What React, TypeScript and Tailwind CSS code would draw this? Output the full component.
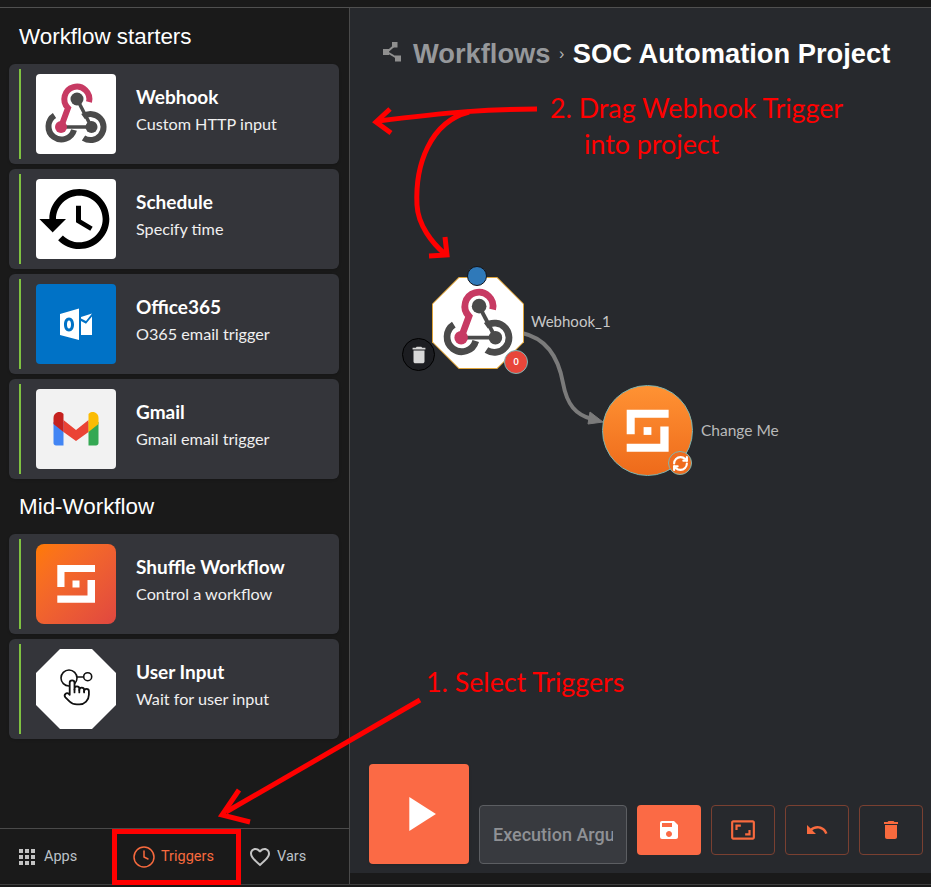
import type { ReactNode } from "react";
import { MdApps, MdAspectRatio, MdDelete, MdFavoriteBorder, MdPlayArrow, MdSave, MdUndo } from "react-icons/md";
import { Clock, RefreshCw } from "lucide-react";

function WebhookIcon({ size = 80 }: { size?: number }) {
  return (
    <svg width={size} height={size} viewBox="0 0 80 80" fill="none">
      <path d="M41 25 L55.5 53" stroke="#4a4a4a" strokeWidth="3.5" />
      <path d="M25 53 H55.5" stroke="#4a4a4a" strokeWidth="3.5" />
      <path d="M18.5 41.5 A13 13 0 1 0 38 56" stroke="#4a4a4a" strokeWidth="6" />
      <path d="M47 42.5 A13 13 0 1 1 47.5 64" stroke="#4a4a4a" strokeWidth="6" />
      <circle cx="55.5" cy="53" r="6" fill="#4a4a4a" />
      <circle cx="41" cy="25" r="6.5" fill="#4a4a4a" />
      <path d="M53 28 A12.5 12.5 0 1 0 32 34 L25 53" stroke="#c73a63" strokeWidth="6" />
      <circle cx="25" cy="53" r="6" fill="#c73a63" />
    </svg>
  );
}

function HistoryIcon() {
  return (
    <svg width="80" height="80" viewBox="0 0 24 24" fill="#000">
      <path d="M13 3c-4.97 0-9 4.03-9 9H1l3.89 3.89.07.14L9 12H6c0-3.87 3.13-7 7-7s7 3.13 7 7-3.13 7-7 7c-1.93 0-3.68-.79-4.94-2.06l-1.42 1.42C8.27 19.99 10.51 21 13 21c4.97 0 9-4.03 9-9s-4.03-9-9-9zm-1 5v5l4.28 2.54.72-1.21-3.5-2.08V8H12z" />
    </svg>
  );
}

function OutlookIcon() {
  return (
    <svg width="80" height="80" viewBox="0 0 80 80">
      <path
        fillRule="evenodd"
        fill="#fff"
        d="M24 30 L43 24.5 V56 L24 51 Z M33 33.5 C29.8 33.5 28 36.5 28 40.5 C28 44.5 29.8 47.5 33 47.5 C36.2 47.5 38 44.5 38 40.5 C38 36.5 36.2 33.5 33 33.5 Z M33 36.5 C34.5 36.5 35 38.5 35 40.5 C35 42.5 34.5 44.5 33 44.5 C31.5 44.5 31 42.5 31 40.5 C31 38.5 31.5 36.5 33 36.5 Z"
      />
      <path fill="#fff" d="M45 33 L56 29.5 L50 37 L45 34.5 Z M45 37 L50 39.8 L56 32.5 V51 H45 Z" />
    </svg>
  );
}

function GmailIcon() {
  return (
    <svg width="80" height="80" viewBox="0 0 80 80">
      <path fill="#4285f4" d="M17.5 33 H27.5 V56.5 H20 C18.6 56.5 17.5 55.4 17.5 54 Z" />
      <path fill="#34a853" d="M52.5 33 H62.5 V54 C62.5 55.4 61.4 56.5 60 56.5 H52.5 Z" />
      <path fill="#ea4335" d="M27.5 31 L40 41 L52.5 31 V43 L40 52 L27.5 43 Z" />
      <path fill="#c5221f" d="M17.5 29 C17.5 24 23 21 27 24.5 L27.5 25 V43 L17.5 35 Z" />
      <path fill="#fbbc04" d="M62.5 29 C62.5 24 57 21 53 24.5 L52.5 25 V43 L62.5 35 Z" />
    </svg>
  );
}

function ShuffleMark({ size = 80 }: { size?: number }) {
  return (
    <svg width={size} height={size} viewBox="0 0 80 80" fill="#fff">
      <path d="M21.3 21 H59 V28 H28.5 V43 H21.3 Z" />
      <path d="M59 36 V58.7 H21.3 V51.5 H51.5 V36 Z" />
      <rect x="36.5" y="36.5" width="7" height="7" />
    </svg>
  );
}

function UserInputIcon() {
  return (
    <svg width="80" height="80" viewBox="0 0 80 80" fill="none" stroke="#111">
      <circle cx="33" cy="29" r="8" strokeWidth="1.6" />
      <path d="M41 28 H47.5" strokeWidth="1.6" />
      <circle cx="51.7" cy="27.7" r="4" strokeWidth="1.6" />
      <g transform="translate(26.5 29) scale(1.2)" strokeWidth="1.5" strokeLinecap="round" strokeLinejoin="round" fill="#fff">
        <path d="M18 11a2 2 0 1 1 4 0v3a8 8 0 0 1-8 8h-2c-2.8 0-4.5-.86-5.99-2.34l-3.6-3.6a2 2 0 0 1 2.83-2.82L6 14V4a2 2 0 0 1 4 0v5.5V9a2 2 0 0 1 4 0v1a2 2 0 0 1 4 0z" />
        <path d="M10 9.5V12M14 10v2M18 11v1" />
      </g>
    </svg>
  );
}

type Starter = { title: string; desc: string; box: string; icon: ReactNode };

const starters: Starter[] = [
  { title: "Webhook", desc: "Custom HTTP input", box: "bg-white rounded", icon: <WebhookIcon /> },
  { title: "Schedule", desc: "Specify time", box: "bg-white rounded", icon: <HistoryIcon /> },
  { title: "Office365", desc: "O365 email trigger", box: "bg-[#0072c6] rounded", icon: <OutlookIcon /> },
  { title: "Gmail", desc: "Gmail email trigger", box: "bg-[#f2f2f2] rounded", icon: <GmailIcon /> },
];

const midWorkflow: Starter[] = [
  {
    title: "Shuffle Workflow",
    desc: "Control a workflow",
    box: "bg-gradient-to-br from-[#ff7a00] to-[#e0473f] rounded-lg",
    icon: <ShuffleMark />,
  },
  {
    title: "User Input",
    desc: "Wait for user input",
    box: "bg-white [clip-path:polygon(30%_0,70%_0,100%_30%,100%_70%,70%_100%,30%_100%,0_70%,0_30%)]",
    icon: <UserInputIcon />,
  },
];

function StarterCard({ item }: { item: Starter }) {
  return (
    <div className="flex h-[100px] items-center rounded-md bg-[#34353a] pl-[10px] shadow-sm">
      <div className="h-[90px] w-[2px] bg-[#7fc241]" />
      <div className={`ml-[15px] h-[80px] w-[80px] shrink-0 overflow-hidden ${item.box}`}>{item.icon}</div>
      <div className="-mt-[8px] ml-5 text-white">
        <div className="text-[19px] font-bold leading-[24px]">{item.title}</div>
        <div className="mt-[4px] text-[16.2px] leading-[22px] text-[#f0f0f0]">{item.desc}</div>
      </div>
    </div>
  );
}

function OutlineButton({ children }: { children: ReactNode }) {
  return (
    <button className="flex h-[50px] w-[63.5px] items-center justify-center rounded border border-[#7a4031] text-[#f86a3e]">
      {children}
    </button>
  );
}

function Canvas() {
  return (
    <div className="relative flex-1">
      {/* workflow nodes sit on a free canvas */}
      <svg className="absolute left-0 top-0" width="581" height="500" fill="none">
        <path d="M172 263 C195 268 208 285 213 313 C217 335 226 345 242 349" stroke="#7b7b7b" strokeWidth="4" />
        <path d="M240 342 L253 352 L238 354 Z" fill="#7b7b7b" stroke="#7b7b7b" strokeWidth="1" />
      </svg>

      <div className="absolute left-[82px] top-[207px] flex h-[92px] w-[92px] items-center justify-center bg-[#dfa43a] [clip-path:polygon(29%_0,71%_0,100%_29%,100%_71%,71%_100%,29%_100%,0_71%,0_29%)]">
        <div className="flex h-[90px] w-[90px] items-center justify-center bg-white [clip-path:polygon(29%_0,71%_0,100%_29%,100%_71%,71%_100%,29%_100%,0_71%,0_29%)]">
          <WebhookIcon size={90} />
        </div>
      </div>
      <div className="absolute left-[117px] top-[196px] h-[20px] w-[20px] rounded-full border border-[#14151a] bg-[#2f79b9]" />
      <div className="absolute left-[52px] top-[268px] flex h-[33px] w-[33px] items-center justify-center rounded-full border border-black bg-[#1c1d21] text-[#d8d8d8]">
        <MdDelete size={22} />
      </div>
      <div className="absolute left-[154px] top-[280px] flex h-[24px] w-[24px] items-center justify-center rounded-full border border-[#7ab5b5] bg-[#e8463a] text-[9px] font-bold text-white">
        0
      </div>
      <div className="absolute left-[181px] top-[241px] text-[15px] leading-[20px] text-[#c8c8c8]">Webhook_1</div>

      <div className="absolute left-[252px] top-[315px] flex h-[91px] w-[91px] items-center justify-center rounded-full border border-[#7fb5b0] bg-gradient-to-b from-[#ff9233] to-[#ee6a1a]">
        <ShuffleMark size={90} />
      </div>
      <div className="absolute left-[318px] top-[381px] flex h-[24px] w-[24px] items-center justify-center rounded-full border border-[#7fb5b0] bg-[#ef6c1f] text-white">
        <RefreshCw size={17} strokeWidth={3} />
      </div>
      <div className="absolute left-[351px] top-[350px] text-[15.5px] leading-[20px] text-[#b9b9b9]">Change Me</div>
    </div>
  );
}

export default function App() {
  return (
    <div
      className="relative flex h-[887px] w-[931px] flex-col overflow-hidden bg-[#1a1a1a]"
      style={{ fontFamily: "Lato, sans-serif" }}
    >
      <div className="h-[8px] shrink-0 border-b border-[#505050]" />

      <div className="flex h-[877px] shrink-0 border-b border-[#3f3f3f]">
        <aside className="flex w-[350px] shrink-0 flex-col border-r border-[#4a4a4a] bg-[#1a1a1a]">
          <div className="flex flex-1 flex-col pl-[9px]">
            <h3 className="mt-[15px] h-[28px] pl-[10px] font-['Liberation_Sans',sans-serif] text-[22.4px] leading-[28px] text-white">
              Workflow starters
            </h3>
            <div className="mt-[13px] flex w-[330px] flex-col gap-[5px]">
              {starters.map((s) => (
                <StarterCard key={s.title} item={s} />
              ))}
            </div>
            <h3 className="mt-[14px] h-[28px] pl-[10px] font-['Liberation_Sans',sans-serif] text-[22.4px] leading-[28px] text-white">
              Mid-Workflow
            </h3>
            <div className="mt-[13px] flex w-[330px] flex-col gap-[5px]">
              {midWorkflow.map((s) => (
                <StarterCard key={s.title} item={s} />
              ))}
            </div>
          </div>
          <div className="flex h-[56px] items-center border-t border-[#4a4a4a] font-['Roboto',sans-serif] text-[14.5px]">
            <div className="flex w-[112px] items-center gap-[5px] pl-[15px] text-[#bcc2c8]">
              <MdApps size={24} className="text-[#c4c4c4]" />
              Apps
            </div>
            <div className="flex w-[128px] items-center gap-[5px] pl-[20px] text-[#f86a3e]">
              <Clock size={24} strokeWidth={1.5} />
              Triggers
            </div>
            <div className="flex items-center gap-[5px] pl-[8px] text-[#bcc2c8]">
              <MdFavoriteBorder size={24} className="text-[#c4c4c4]" />
              Vars
            </div>
          </div>
        </aside>

        <main className="flex min-w-0 flex-1 flex-col">
          <div className="flex h-[865px] flex-col bg-[#27292d]">
            <div className="flex h-[62px] shrink-0 items-start gap-[11px] pl-[32px] pt-[30px] font-['Liberation_Sans',sans-serif] text-[27.3px] font-bold leading-[32px]">
              <svg width="20" height="22" viewBox="0 0 20 22" fill="none" className="mt-[3px]">
                <path d="M5 11 L13 4 M5 11 L15 17" stroke="#8f8f8f" strokeWidth="2" />
                <rect x="1" y="8" width="6" height="6" fill="#8f8f8f" />
                <rect x="10" y="1" width="5.5" height="5.5" fill="#8f8f8f" />
                <rect x="13" y="14.5" width="6" height="6" fill="#8f8f8f" />
              </svg>
              <div className="flex items-center whitespace-nowrap">
                <span className="text-[#96989b]">Workflows</span>
                <span className="mx-[8.5px] text-[16px] font-normal text-[#b5b5b5]">›</span>
                <span className="text-white">SOC Automation Project</span>
              </div>
            </div>
            <Canvas />
            <div className="flex items-end gap-[10px] pb-[9px] pl-[19px]">
              <button className="flex h-[100px] w-[100px] items-center justify-center rounded bg-[#fb6a45] text-white shadow">
                <MdPlayArrow size={58} />
              </button>
              <input
                placeholder="Execution Arguments"
                className="h-[59px] w-[148px] rounded border border-[#5c5e62] bg-[#383a3f] px-[13px] font-['Roboto',sans-serif] text-[18px] font-medium outline-none placeholder:text-[#8f9195]"
              />
              <div className="flex items-start gap-[10.5px] self-start pt-[41px]">
                <button className="flex h-[50px] w-[63.5px] items-center justify-center rounded bg-[#fb6a45] text-white">
                  <MdSave size={24} />
                </button>
                <OutlineButton>
                  <MdAspectRatio size={26} />
                </OutlineButton>
                <OutlineButton>
                  <MdUndo size={24} />
                </OutlineButton>
                <OutlineButton>
                  <MdDelete size={24} />
                </OutlineButton>
              </div>
            </div>
          </div>
        </main>
      </div>

      {/* red tutorial annotations over the screenshot */}
      <svg className="pointer-events-none absolute left-0 top-0" width="931" height="887" fill="none" stroke="#ff0000" strokeLinecap="butt">
        <path d="M537 109 C490 109 450 112 378 121" strokeWidth="5" />
        <path d="M390 109 L376 122 L391 133" strokeWidth="5" />
        <path d="M469 112 C430 122 415 165 417 205 C418 225 432 243 445 254" strokeWidth="5" />
        <path d="M445 237 L447 255 L429 256" strokeWidth="5" />
        <path d="M420 700 L226 812" strokeWidth="5" />
        <path d="M239 790 L222 815 L250 822" strokeWidth="5" />
      </svg>
      <div className="absolute left-[550px] top-[90px] text-[26.8px] leading-[36px] text-[#ff0000]">2. Drag Webhook Trigger</div>
      <div className="absolute left-[584px] top-[126px] text-[26.8px] leading-[36px] text-[#ff0000]">into project</div>
      <div className="absolute left-[426px] top-[664px] text-[26.8px] leading-[36px] text-[#ff0000]">1. Select Triggers</div>
      <div className="absolute left-[112px] top-[829px] h-[56px] w-[129px] border-[5px] border-[#ff0000]" />
    </div>
  );
}
